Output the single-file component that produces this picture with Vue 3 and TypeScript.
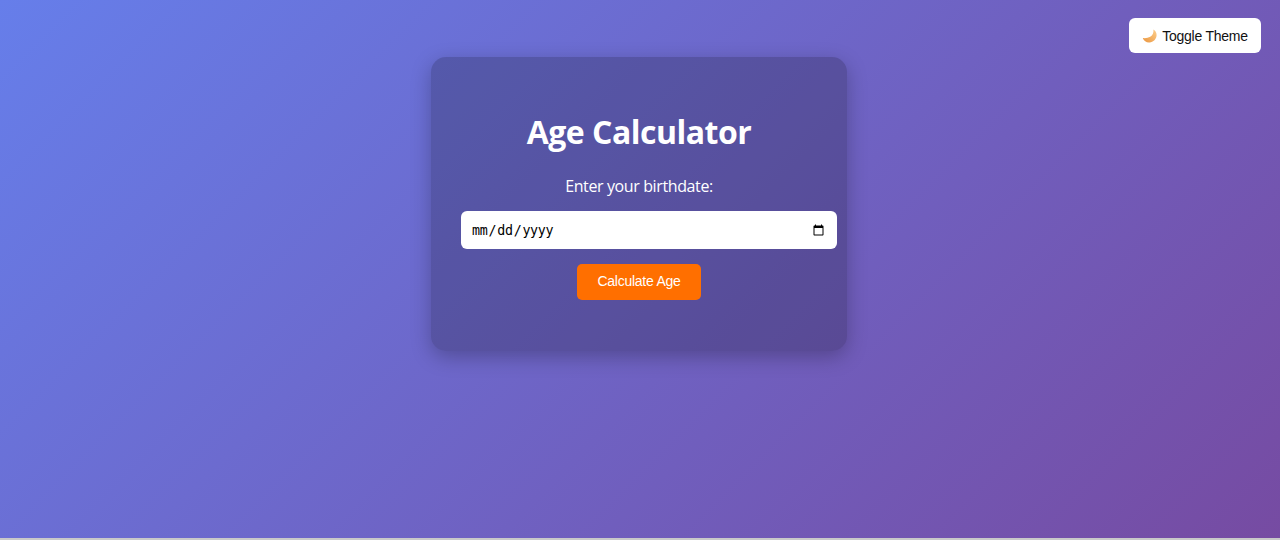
<script setup lang="ts">
import { ref } from 'vue'
const birthdate = ref('')
</script>

<template>
  <div class="page">
    <button class="toggle" type="button">
      <svg class="moon" viewBox="0 0 16 16" width="16" height="16" aria-hidden="true">
        <defs>
          <linearGradient id="moonFill" x1="0.9" y1="0.1" x2="0.1" y2="0.9">
            <stop offset="0" stop-color="#fbc985" />
            <stop offset="1" stop-color="#ec9a45" />
          </linearGradient>
        </defs>
        <path d="M11.4 1.6C11.8 4.8 10.8 7.4 8.2 8.8 6.2 9.9 3.4 10.4.8 10 1.9 13 4.4 14.8 7.4 14.6 11.4 14.2 14.6 11 14.6 7 14.6 4.8 13.4 2.8 11.4 1.6z" fill="url(#moonFill)" />
      </svg>
      <span>Toggle Theme</span>
    </button>
    <main class="card">
      <h1>Age Calculator</h1>
      <label for="birthdate">Enter your birthdate:</label>
      <input id="birthdate" v-model="birthdate" type="date" />
      <button class="calc" type="button">Calculate Age</button>
    </main>
  </div>
</template>

<style>
html, body { margin: 0; padding: 0; background: #c9c9c9; }
</style>

<style scoped>
.page {
  position: relative;
  box-sizing: border-box;
  height: 538px;
  padding: 57px 2px 0 0;
  display: flex;
  flex-direction: column;
  align-items: center;
  background: linear-gradient(135deg, #667eea, #764ba2);
  overflow: hidden;
  font-family: "Liberation Sans", Arial, sans-serif;
}
.toggle {
  position: absolute;
  top: 18px;
  right: 19px;
  width: 132px;
  height: 35px;
  display: flex;
  align-items: center;
  justify-content: center;
  gap: 4px;
  padding: 0;
  border: 0;
  border-radius: 6px;
  background: #fff;
  color: #111;
  font: 14px "Liberation Sans", Arial, sans-serif;
  letter-spacing: -0.25px;
}
.moon { flex: none; }
.card {
  box-sizing: border-box;
  width: 416px;
  height: 294px;
  padding: 56px 30px 0;
  display: flex;
  flex-direction: column;
  align-items: flex-start;
  border-radius: 15px;
  background: rgba(0, 0, 0, 0.2);
  box-shadow: 0 6px 20px rgba(0, 0, 0, 0.25);
  color: #fff;
  font-family: "Open Sans", sans-serif;
}
h1 {
  align-self: stretch;
  margin: 0;
  text-align: center;
  font-size: 32px;
  line-height: 38px;
  font-weight: 700;
  letter-spacing: -0.5px;
}
label {
  align-self: stretch;
  margin-top: 24px;
  text-align: center;
  font-size: 16px;
  line-height: 22px;
  letter-spacing: -0.38px;
}
input {
  box-sizing: content-box;
  width: 100%;
  height: 18px;
  margin-top: 14px;
  padding: 11px 10px 9px;
  border: 0;
  border-radius: 6px;
  background: #fff;
  color: #000;
  font-size: 13.33px;
  letter-spacing: -0.3px;
}
.calc {
  align-self: center;
  width: 124px;
  height: 36px;
  margin-top: 15px;
  padding: 0 0 2px;
  border: 0;
  border-radius: 5px;
  background: #ff6f00;
  color: #fff;
  font: 14px "Liberation Sans", Arial, sans-serif;
  letter-spacing: -0.25px;
}
</style>
